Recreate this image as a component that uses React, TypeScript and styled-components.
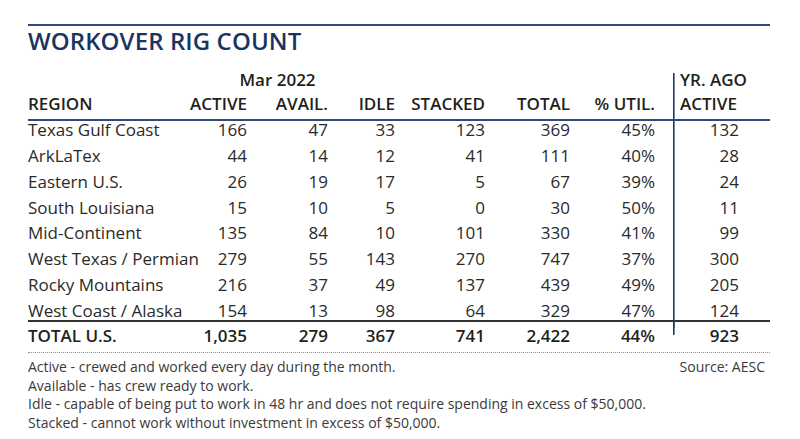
import React from "react";
import styled, { createGlobalStyle, css } from "styled-components";

const NAVY = "#1a3461";
const RULE = "#2c4b7c";
const INK = "#231f20";

const GlobalStyle = createGlobalStyle`
  html, body { margin: 0; padding: 0; background: #ffffff; }
  body { font-family: "Open Sans", "Noto Sans", sans-serif; color: ${INK}; }
`;

const Page = styled.div`
  box-sizing: content-box;
  width: 742px;
  padding: 24px 0 0 28px;
`;

const TopRule = styled.div`
  border-top: 2px solid ${RULE};
`;

const Title = styled.h1`
  margin: 0;
  font-size: 24px;
  line-height: 30px;
  font-weight: 600;
  color: ${NAVY};
  letter-spacing: 0.1px;
`;

type RowKind = "month" | "head" | "data" | "total";

const Row = styled.div<{ $kind: RowKind }>`
  display: grid;
  grid-template-columns: 160px 59px 81px 67px 90px 85px 85px 18px 66px 31px;
  align-items: start;
  font-size: 17px;
  line-height: 18px;
  ${({ $kind }) =>
    $kind === "month" &&
    css`
      margin-top: 17px;
      height: 22px;
      line-height: 13px;
      font-weight: 600;
    `}
  ${({ $kind }) =>
    $kind === "head" &&
    css`
      height: 24px;
      font-weight: 600;
      border-bottom: 2px solid ${RULE};
    `}
  ${({ $kind }) =>
    $kind === "data" &&
    css`
      height: 25.86px;
      font-weight: 400;
      color: #2a2a2a;
    `}
  ${({ $kind }) =>
    $kind === "total" &&
    css`
      margin-top: -8px;
      border-top: 2px solid #333333;
      border-bottom: 1px dotted #8a8a8a;
      padding: 5.5px 0 6.5px;
      font-weight: 600;
    `}
`;

const Cell = styled.div<{ $right?: boolean }>`
  text-align: ${({ $right }) => ($right ? "right" : "left")};
  white-space: nowrap;
`;

const MonthLabel = styled.div`
  grid-column: 2 / 5;
  text-align: center;
  padding-right: 28px;
`;

const YrCell = styled.div<{ $right?: boolean; $lineH?: string }>`
  grid-column: 9;
  align-self: stretch;
  white-space: nowrap;
  text-align: ${({ $right }) => ($right ? "right" : "left")};
  padding-left: ${({ $right }) => ($right ? "0" : "7px")};
  background: linear-gradient(#1c3a66, #1c3a66) no-repeat left top /
    1.6px ${({ $lineH }) => $lineH || "100%"};
`;

const TotalYrCell = styled(YrCell)`
  margin-top: -5.5px;
  padding-top: 5.5px;
`;

const Notes = styled.div`
  display: flex;
  justify-content: space-between;
  padding-top: 5.5px;
  font-size: 14px;
  line-height: 18.4px;
  color: #3a3a3a;
`;

const NoteList = styled.div`
  display: flex;
  flex-direction: column;
`;

const Source = styled.div`
  padding-right: 5px;
`;

type Rec = [string, string, string, string, string, string, string, string];

const rows: Rec[] = [
  ["Texas Gulf Coast", "166", "47", "33", "123", "369", "45%", "132"],
  ["ArkLaTex", "44", "14", "12", "41", "111", "40%", "28"],
  ["Eastern U.S.", "26", "19", "17", "5", "67", "39%", "24"],
  ["South Louisiana", "15", "10", "5", "0", "30", "50%", "11"],
  ["Mid-Continent", "135", "84", "10", "101", "330", "41%", "99"],
  ["West Texas / Permian", "279", "55", "143", "270", "747", "37%", "300"],
  ["Rocky Mountains", "216", "37", "49", "137", "439", "49%", "205"],
  ["West Coast / Alaska", "154", "13", "98", "64", "329", "47%", "124"],
];

const total: Rec = ["TOTAL U.S.", "1,035", "279", "367", "741", "2,422", "44%", "923"];

const DataCells: React.FC<{ r: Rec; totalRow?: boolean }> = ({ r, totalRow }) => (
  <>
    <Cell>{r[0]}</Cell>
    {r.slice(1, 7).map((v, i) => (
      <Cell key={i} $right>
        {v}
      </Cell>
    ))}
    {totalRow ? (
      <TotalYrCell $right $lineH="13px">
        {r[7]}
      </TotalYrCell>
    ) : (
      <YrCell $right>{r[7]}</YrCell>
    )}
  </>
);

export default function App() {
  return (
    <>
      <GlobalStyle />
      <Page>
        <TopRule />
        <Title>WORKOVER RIG COUNT</Title>
        <Row $kind="month">
          <MonthLabel>Mar 2022</MonthLabel>
          <YrCell>YR. AGO</YrCell>
        </Row>
        <Row $kind="head">
          <Cell>REGION</Cell>
          <Cell $right>ACTIVE</Cell>
          <Cell $right>AVAIL.</Cell>
          <Cell $right>IDLE</Cell>
          <Cell $right>STACKED</Cell>
          <Cell $right>TOTAL</Cell>
          <Cell $right>% UTIL.</Cell>
          <YrCell>ACTIVE</YrCell>
        </Row>
        {rows.map((r) => (
          <Row $kind="data" key={r[0]}>
            <DataCells r={r} />
          </Row>
        ))}
        <Row $kind="total">
          <DataCells r={total} totalRow />
        </Row>
        <Notes>
          <NoteList>
            <span>Active - crewed and worked every day during the month.</span>
            <span>Available - has crew ready to work.</span>
            <span>
              Idle - capable of being put to work in 48 hr and does not require spending in excess of $50,000.
            </span>
            <span>Stacked - cannot work without investment in excess of $50,000.</span>
          </NoteList>
          <Source>Source: AESC</Source>
        </Notes>
      </Page>
    </>
  );
}
